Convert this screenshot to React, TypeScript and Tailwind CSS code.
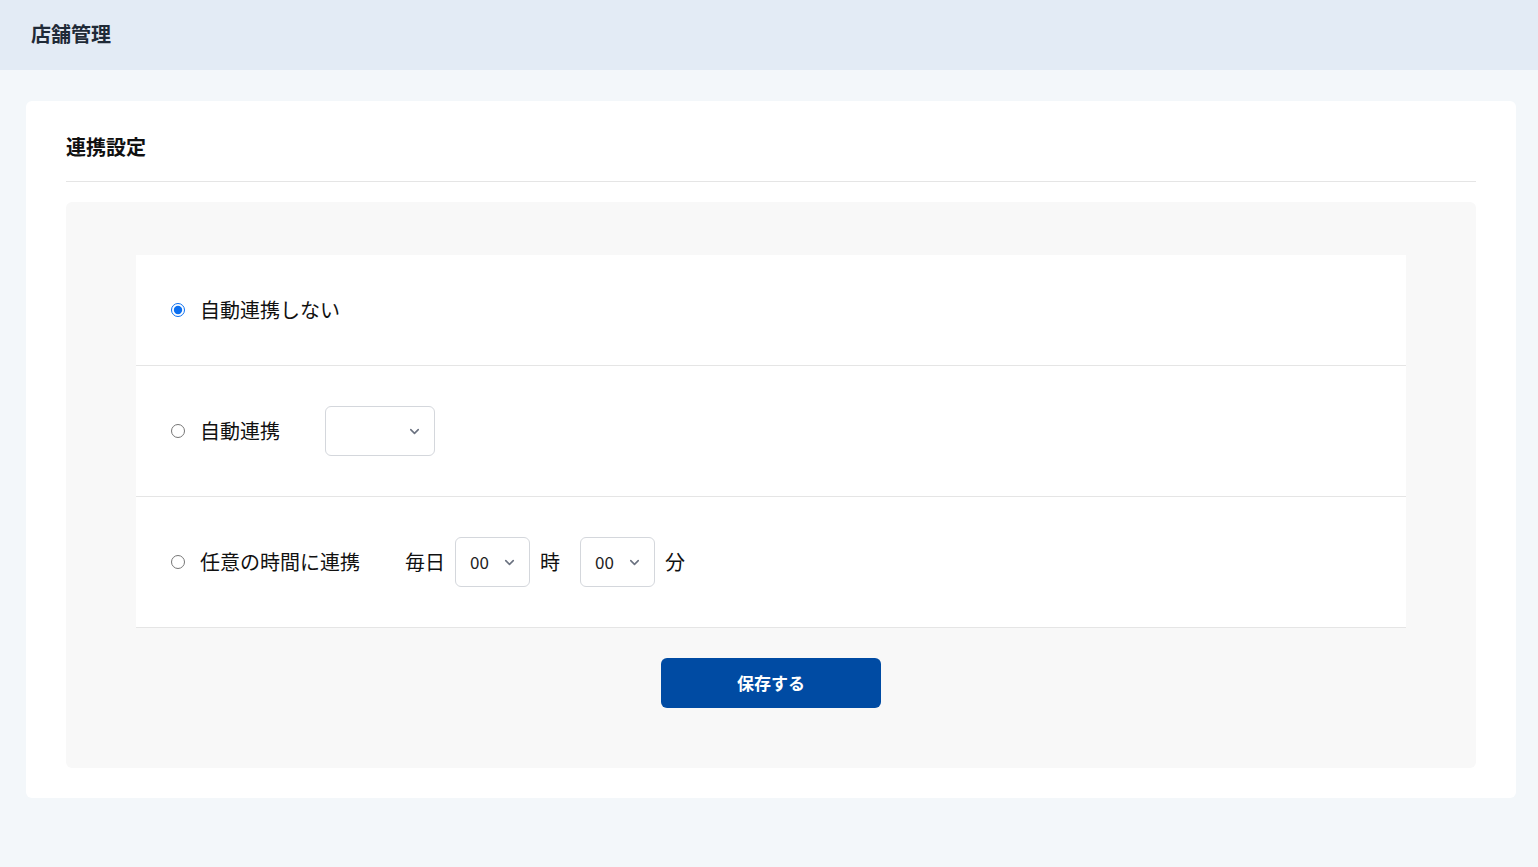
import React, { useState } from 'react';
import { ChevronDown } from 'lucide-react';

const FONT = { fontFamily: '"Noto Sans CJK JP", "Noto Sans", sans-serif' };

function Select({ width, value, options }: { width: string; value: string; options: string[] }) {
  return (
    <div className={`relative ${width} h-[50px]`}>
      <select
        defaultValue={value}
        className="w-full h-full appearance-none bg-white border border-[#d4d7dc] rounded-[6px] pl-[14px] pr-8 text-[17px] text-[#222] outline-none"
      >
        {options.map((o) => (
          <option key={o} value={o}>
            {o}
          </option>
        ))}
      </select>
      <ChevronDown
        size={15}
        strokeWidth={2.5}
        className="absolute right-[13px] top-[18px] text-[#6b7280] pointer-events-none"
      />
    </div>
  );
}

export default function App() {
  const [mode, setMode] = useState('none');
  const hours = Array.from({ length: 24 }, (_, i) => String(i).padStart(2, '0'));
  const mins = Array.from({ length: 60 }, (_, i) => String(i).padStart(2, '0'));

  return (
    <div className="min-h-screen bg-[#f3f7fa] text-[#1a1a1a]" style={FONT}>
      {/* Header */}
      <header className="h-[70px] bg-[#e3ebf5] flex items-center px-[31px]">
        <h1 className="-mt-[2px] text-[20px] font-bold text-[#1f2a37]">店舗管理</h1>
      </header>

      <main className="pl-[26px] pr-[22px] pt-[31px] pb-[69px]">
        <section className="bg-white rounded-[6px] px-[40px] pb-[30px]">
          <div className="h-[81px] flex items-end pb-[19px] border-b border-[#e5e5e5]">
            <h2 className="text-[20px] font-bold text-[#111]">連携設定</h2>
          </div>

          <div className="mt-[20px] bg-[#f8f8f8] rounded-[6px] pt-[53px] pb-[60px] px-[70px]">
            <div className="bg-white">
              {/* Row 1 */}
              <label className="h-[111px] flex items-center pl-[35px] border-b border-[#e5e5e5] cursor-pointer">
                <input
                  type="radio"
                  name="mode"
                  checked={mode === 'none'}
                  onChange={() => setMode('none')}
                  className="w-[14px] h-[14px] m-0 accent-[#0b6ff0]"
                />
                <span className="ml-[15px] text-[20px] text-[#111]">自動連携しない</span>
              </label>

              {/* Row 2 */}
              <div className="h-[131px] flex items-center pl-[35px] border-b border-[#e5e5e5]">
                <label className="flex items-center cursor-pointer">
                  <input
                    type="radio"
                    name="mode"
                    checked={mode === 'auto'}
                    onChange={() => setMode('auto')}
                    className="w-[14px] h-[14px] m-0 accent-[#0b6ff0]"
                  />
                  <span className="ml-[15px] text-[20px] text-[#111]">自動連携</span>
                </label>
                <div className="ml-[45px]">
                  <Select width="w-[110px]" value="" options={['', '1時間', '3時間', '6時間']} />
                </div>
              </div>

              {/* Row 3 */}
              <div className="h-[131px] flex items-center pl-[35px] border-b border-[#e5e5e5]">
                <label className="flex items-center cursor-pointer">
                  <input
                    type="radio"
                    name="mode"
                    checked={mode === 'time'}
                    onChange={() => setMode('time')}
                    className="w-[14px] h-[14px] m-0 accent-[#0b6ff0]"
                  />
                  <span className="ml-[15px] text-[20px] text-[#111]">任意の時間に連携</span>
                </label>
                <span className="ml-[45px] text-[20px] text-[#111]">毎日</span>
                <div className="ml-[10px]">
                  <Select width="w-[75px]" value="00" options={hours} />
                </div>
                <span className="ml-[10px] text-[20px] text-[#111]">時</span>
                <div className="ml-[20px]">
                  <Select width="w-[75px]" value="00" options={mins} />
                </div>
                <span className="ml-[10px] text-[20px] text-[#111]">分</span>
              </div>
            </div>

            <div className="flex justify-center mt-[30px]">
              <button className="w-[220px] h-[50px] rounded-[6px] bg-[#004ba3] text-white text-[17px] font-bold">
                保存する
              </button>
            </div>
          </div>
        </section>
      </main>
    </div>
  );
}
